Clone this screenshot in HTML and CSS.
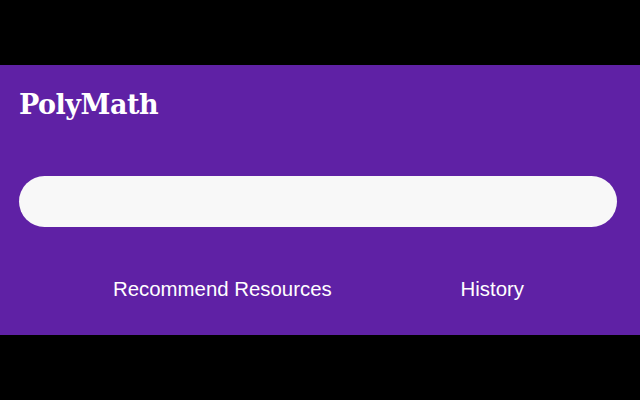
FILE: index.html
```html
<!DOCTYPE html>
<html>
<head>
<meta charset="utf-8">
<link rel="stylesheet" href="styles.css">
</head>
<body>
<div class="page">
  <header class="panel">
    <h1 class="brand">PolyMath</h1>
    <div class="search-wrap"><input class="search" type="text" aria-label="Search"></div>
    <nav class="nav">
      <a class="nav-link" href="#">Recommend Resources</a>
      <a class="nav-link" href="#">History</a>
    </nav>
  </header>
</div>
</body>
</html>
```
FILE: styles.css
```css
html, body {
  margin: 0;
  padding: 0;
  background: #000;
  height: 100%;
}
.page {
  height: 400px;
  display: flex;
  flex-direction: column;
  justify-content: center;
}
.panel {
  background: #5f21a5;
  height: 270px;
  box-sizing: border-box;
  padding: 22px 23px 0 19px;
  display: flex;
  flex-direction: column;
}
.brand {
  margin: 0;
  font-family: "DejaVu Serif", "Liberation Serif", serif;
  font-weight: bold;
  font-size: 27px;
  line-height: 36px;
  color: #fff;
  letter-spacing: -0.5px;
}
.search-wrap {
  margin-top: 53px;
}
.search {
  display: block;
  width: 100%;
  box-sizing: border-box;
  height: 51px;
  border: none;
  border-radius: 26px;
  background: #f8f8f8;
  outline: none;
  padding: 0 20px;
}
.nav {
  margin: 50px -23px 0 -19px;
  padding: 0 116px 0 113px;
  display: flex;
  justify-content: space-between;
}
.nav-link {
  font-family: "Liberation Sans", Arial, sans-serif;
  font-size: 20.4px;
  line-height: 24px;
  color: #fff;
  text-decoration: none;
}
```
